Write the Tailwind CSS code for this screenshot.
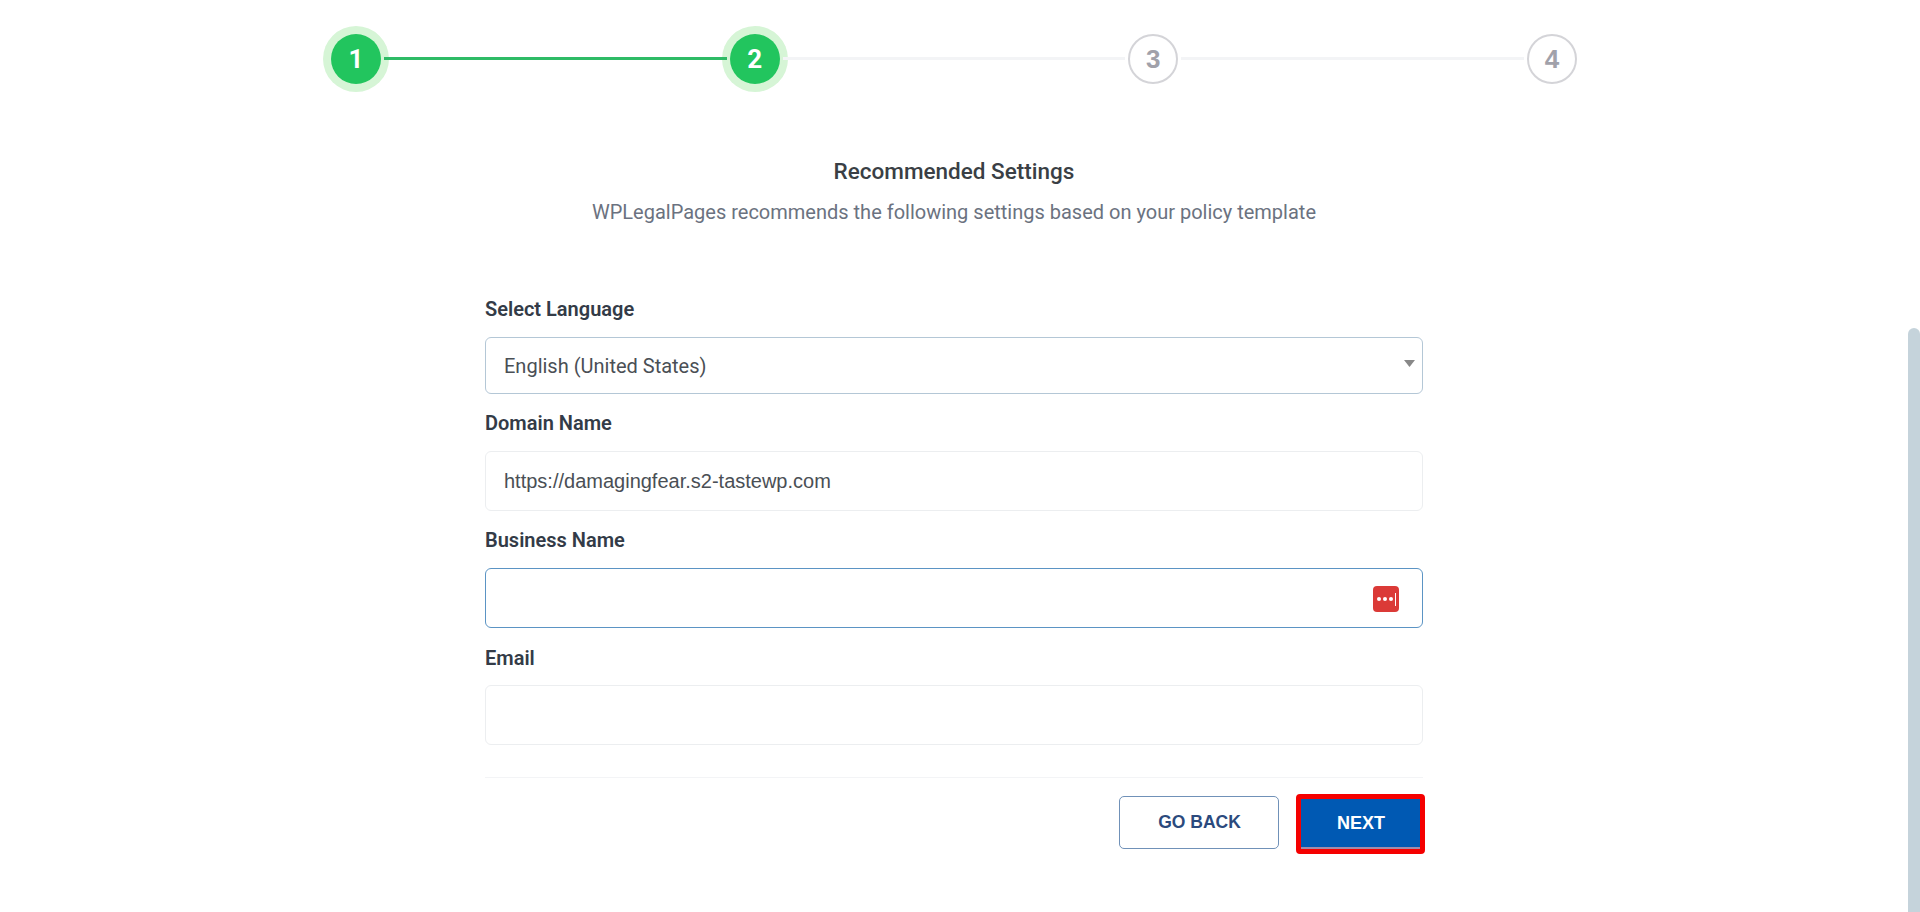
<!DOCTYPE html>
<html lang="en">

<head>
    <meta charset="UTF-8">
    <title>WPLegalPages Wizard</title>
    <script src="https://cdn.jsdelivr.net/npm/@tailwindcss/browser@4"></script>
</head>

<body class="bg-white h-[912px] overflow-hidden font-['Roboto',sans-serif]">

    <div class="w-[1908px]">
        <!-- Stepper -->
        <div class="flex items-center w-[1246px] mx-auto pt-[34px]">
            <div class="w-[50px] h-[50px] shrink-0 rounded-full bg-[#22c55e] shadow-[0_0_0_8px_#d6f5d6] flex items-center justify-center text-white text-[26px] font-bold">1</div>
            <div class="relative z-10 flex-1 h-[3px] mx-[3px] mb-[1px] bg-[#2fbb66]"></div>
            <div class="w-[50px] h-[50px] shrink-0 rounded-full bg-[#22c55e] shadow-[0_0_0_8px_#d6f5d6] flex items-center justify-center text-white text-[26px] font-bold">2</div>
            <div class="relative z-10 flex-1 h-[3px] mx-[3px] mb-[1px] bg-[#f3f4f6]"></div>
            <div class="w-[50px] h-[50px] shrink-0 rounded-full border-2 border-[#d4d4d8] flex items-center justify-center text-[#a1a1aa] text-[26px] font-bold font-['Liberation_Sans',sans-serif]">3</div>
            <div class="relative z-10 flex-1 h-[3px] mx-[3px] mb-[1px] bg-[#f3f4f6]"></div>
            <div class="w-[50px] h-[50px] shrink-0 rounded-full border-2 border-[#d4d4d8] flex items-center justify-center text-[#a1a1aa] text-[26px] font-bold font-['Liberation_Sans',sans-serif]">4</div>
        </div>

        <!-- Heading -->
        <div class="text-center mt-[73px]">
            <h2 class="text-[22.5px] leading-[28px] font-medium text-[#3a3f45]">Recommended Settings</h2>
            <p class="mt-[15px] text-[20px] leading-[24px] text-[#6b7280]">WPLegalPages recommends the following settings based on your policy template</p>
        </div>

        <!-- Form -->
        <form class="w-[938px] mx-auto mt-[73px]">
            <label class="block text-[20px] leading-[24px] font-semibold text-[#333b47]">Select Language</label>
            <div class="relative mt-[16px]">
                <select class="block w-full h-[57px] px-[18px] appearance-none bg-white border border-[#b4c7d6] rounded-[6px] text-[20px] text-[#4a4f55] font-['Roboto',sans-serif]">
                    <option>English (United States)</option>
                </select>
                <svg class="absolute right-[8px] top-[23px] w-[11px] h-[7px]" viewBox="0 0 11 7"><path d="M0 0h11L5.5 7z" fill="#888"/></svg>
            </div>

            <label class="block mt-[17px] text-[20px] leading-[24px] font-semibold text-[#333b47]">Domain Name</label>
            <input type="text" value="https://damagingfear.s2-tastewp.com" class="block w-full h-[60px] mt-[16px] px-[18px] bg-white border border-[#eceef0] rounded-[6px] text-[20px] text-[#4a4f55] font-['Liberation_Sans',sans-serif]">

            <label class="block mt-[17px] text-[20px] leading-[24px] font-semibold text-[#333b47]">Business Name</label>
            <div class="relative mt-[16px]">
                <input type="text" class="block w-full h-[60px] px-[18px] bg-white border border-[#5b94c4] rounded-[6px]">
                <div class="absolute right-[24px] top-[18px] w-[26px] h-[26px] rounded-[4px] bg-[#db3a37] flex items-center justify-center gap-[2px]">
                    <span class="w-[4px] h-[4px] rounded-full bg-white"></span>
                    <span class="w-[4px] h-[4px] rounded-full bg-white"></span>
                    <span class="w-[4px] h-[4px] rounded-full bg-white"></span>
                    <span class="w-[1px] h-[13px] bg-white"></span>
                </div>
            </div>

            <label class="block mt-[18px] text-[20px] leading-[24px] font-semibold text-[#333b47]">Email</label>
            <input type="email" class="block w-full h-[60px] mt-[15px] px-[18px] bg-white border border-[#eceef0] rounded-[6px]">

            <!-- Buttons -->
            <div class="mt-[32px] border-t border-[#f3f4f6] flex justify-end items-start">
                <button type="button" class="mt-[18px] w-[160px] h-[53px] pl-[1px] border border-[#7091b8] rounded-[5px] bg-white text-[#2b4a7d] text-[17.5px] font-bold font-['Liberation_Sans',sans-serif]">GO BACK</button>
                <button type="button" class="mt-[16px] ml-[17px] -mr-[2px] w-[129px] h-[60px] pl-[1px] pb-[2px] border-[5px] border-[#f50000] rounded-[4px] bg-[#0059b3] shadow-[inset_0_-2px_0_#a08cab] text-white text-[18px] font-bold font-['Liberation_Sans',sans-serif]">NEXT</button>
            </div>
        </form>
    </div>

    <!-- Scrollbar -->
    <div class="fixed right-0 top-[328px] bottom-0 w-[12px] rounded-t-[6px] bg-[#c5d3db]"></div>

</body>
</html>
